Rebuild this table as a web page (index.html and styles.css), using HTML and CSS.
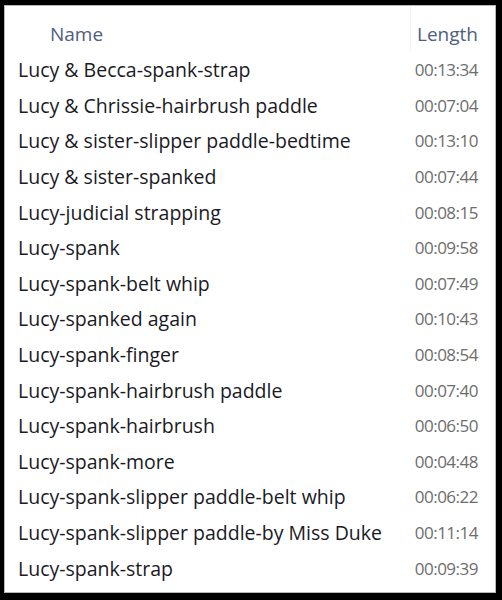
FILE: index.html
```html
<!DOCTYPE html>
<html lang="en">
<head>
    <meta charset="UTF-8">
    <title>Lucy - file list</title>
    <link rel="stylesheet" href="styles.css">
</head>
<body>
    <div class="panel">
        <div class="list-header">
            <span class="col-name">Name</span>
            <span class="col-length">Length</span>
        </div>
        <ul class="file-list">
            <li><span class="name">Lucy &amp; Becca-spank-strap</span><span class="length">00:13:34</span></li>
            <li><span class="name">Lucy &amp; Chrissie-hairbrush paddle</span><span class="length">00:07:04</span></li>
            <li><span class="name">Lucy &amp; sister-slipper paddle-bedtime</span><span class="length">00:13:10</span></li>
            <li><span class="name">Lucy &amp; sister-spanked</span><span class="length">00:07:44</span></li>
            <li><span class="name">Lucy-judicial strapping</span><span class="length">00:08:15</span></li>
            <li><span class="name">Lucy-spank</span><span class="length">00:09:58</span></li>
            <li><span class="name">Lucy-spank-belt whip</span><span class="length">00:07:49</span></li>
            <li><span class="name">Lucy-spanked again</span><span class="length">00:10:43</span></li>
            <li><span class="name">Lucy-spank-finger</span><span class="length">00:08:54</span></li>
            <li><span class="name">Lucy-spank-hairbrush paddle</span><span class="length">00:07:40</span></li>
            <li><span class="name">Lucy-spank-hairbrush</span><span class="length">00:06:50</span></li>
            <li><span class="name">Lucy-spank-more</span><span class="length">00:04:48</span></li>
            <li><span class="name">Lucy-spank-slipper paddle-belt whip</span><span class="length">00:06:22</span></li>
            <li><span class="name">Lucy-spank-slipper paddle-by Miss Duke</span><span class="length">00:11:14</span></li>
            <li><span class="name">Lucy-spank-strap</span><span class="length">00:09:39</span></li>
        </ul>
    </div>
</body>
</html>
```

FILE: styles.css
```css
/* Black frame round the list */
body, html {
    margin: 0;
    padding: 0;
    height: 100%;
    background-color: #000000;
    font-family: 'Open Sans', 'Noto Sans', 'DejaVu Sans', sans-serif;
}

body {
    padding: 5px 6px 7px 4px;
    box-sizing: border-box;
}

.panel {
    height: 100%;
    background-color: #ffffff;
    border: 1px solid #b9b9b9;
    box-sizing: border-box;
}

/* Column header */
.list-header {
    display: flex;
    justify-content: space-between;
    height: 46px;
    padding: 15px 17px 0 45px;
    box-sizing: border-box;
    color: #4d6082;
    font-size: 19px;
    line-height: 26px;
}

.col-length {
    position: relative;
}

/* faint divider between the header columns */
.col-length::before {
    content: "";
    position: absolute;
    left: -7px;
    top: -15px;
    height: 46px;
    border-left: 1px solid #f5f5f5;
}

/* File rows */
.file-list {
    list-style: none;
    margin: 0;
    padding: 0;
}

.file-list li {
    display: flex;
    justify-content: space-between;
    align-items: center;
    height: 35.6px;
    padding: 0 17px 0 13px;
    font-size: 19.5px;
}

.name {
    color: #1a1a24;
}

.length {
    color: #6d6d6d;
    font-size: 17px;
    letter-spacing: -0.5px;
}
```
